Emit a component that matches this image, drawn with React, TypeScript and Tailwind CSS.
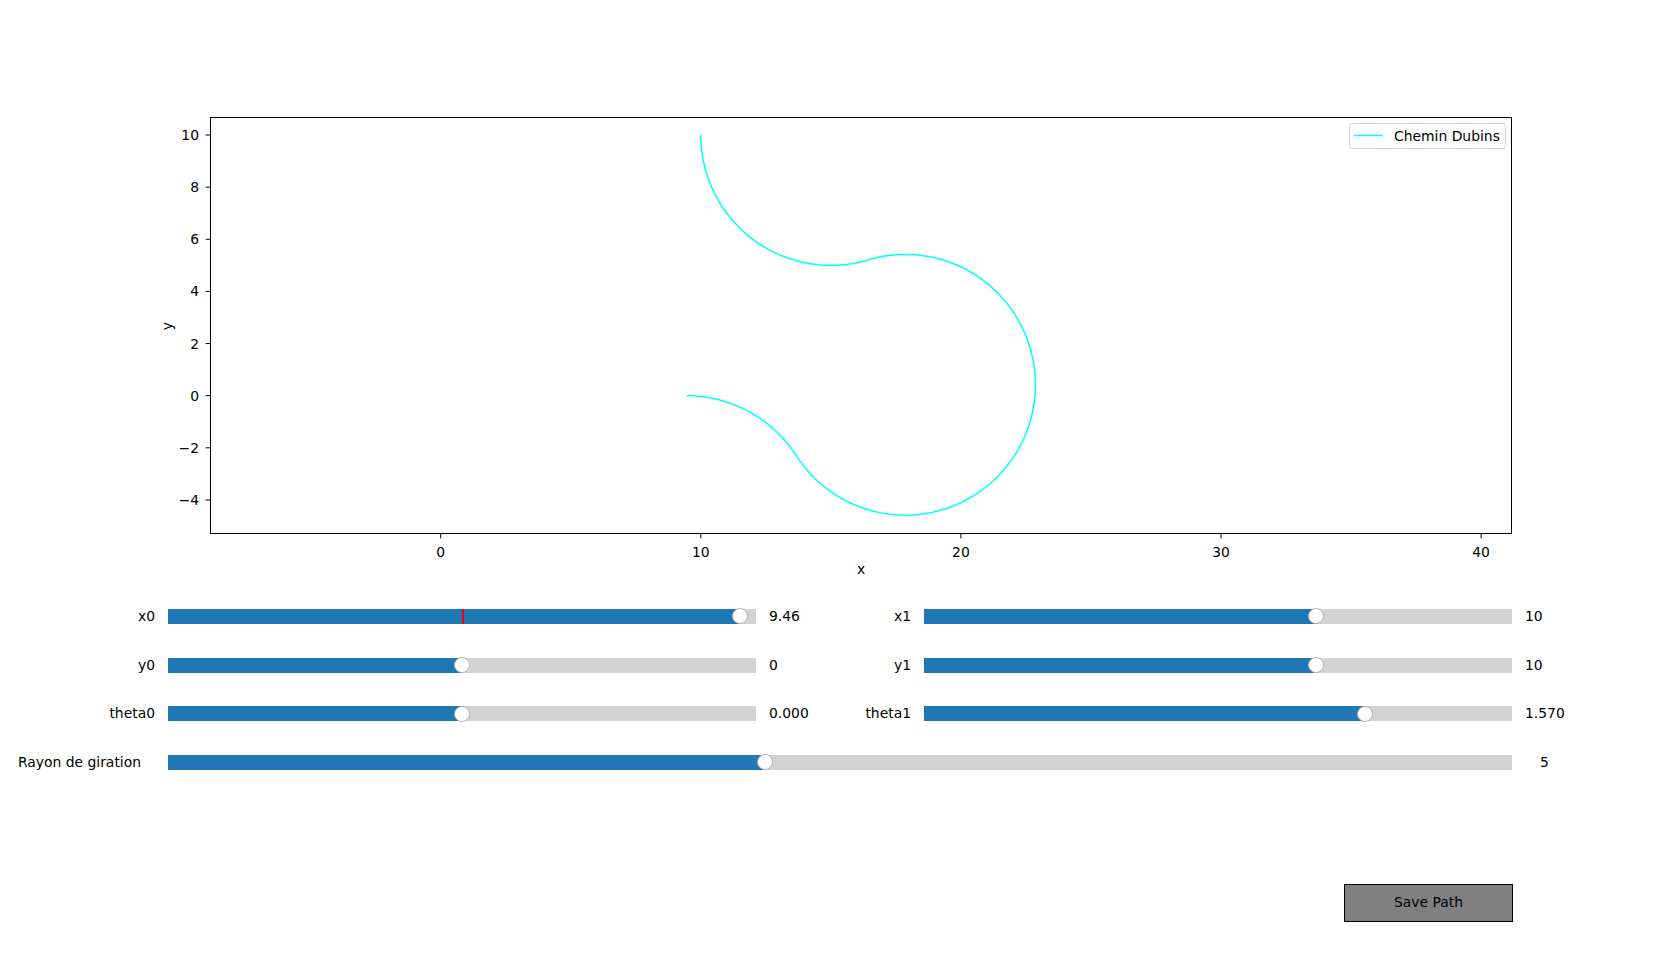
import React from "react";

const FONT = { fontFamily: '"DejaVu Sans", "Liberation Sans", sans-serif' };

// axes geometry (pixels)
const AX = { left: 210.5, top: 117.5, right: 1511.5, bottom: 533.5 };
const X0PX = 440.7; // x = 0
const Y10PX = 135; // y = 10
const SX = 26.01;
const SY = 26.07;

const px = (x: number) => X0PX + x * SX;
const py = (y: number) => Y10PX + (10 - y) * SY;

function dubinsPoints() {
  const r = 5;
  const c1 = [9.46, -5];
  const c3 = [15, 10];
  const dx = c3[0] - c1[0];
  const dy = c3[1] - c1[1];
  const d = Math.hypot(dx, dy);
  const ux = dx / d;
  const uy = dy / d;
  const h = Math.sqrt(4 * r * r - (d / 2) * (d / 2));
  const c2 = [c1[0] + dx / 2 + h * uy, c1[1] + dy / 2 - h * ux];
  const pts: [number, number][] = [];
  const arc = (c: number[], a0: number, a1: number) => {
    const n = 120;
    for (let i = 0; i <= n; i++) {
      const a = a0 + ((a1 - a0) * i) / n;
      pts.push([c[0] + r * Math.cos(a), c[1] + r * Math.sin(a)]);
    }
  };
  const t12 = Math.atan2(c2[1] - c1[1], c2[0] - c1[0]);
  arc(c1, Math.PI / 2, t12);
  const a2s = Math.atan2(c1[1] - c2[1], c1[0] - c2[0]);
  let a2e = Math.atan2(c3[1] - c2[1], c3[0] - c2[0]);
  while (a2e < a2s) a2e += Math.PI * 2;
  arc(c2, a2s, a2e);
  const a3s = Math.atan2(c2[1] - c3[1], c2[0] - c3[0]);
  arc(c3, a3s, -Math.PI);
  return pts.map(([x, y]) => `${px(x).toFixed(2)},${py(y).toFixed(2)}`).join(" ");
}

function Chart() {
  const xticks = [0, 10, 20, 30, 40];
  const yticks = [-4, -2, 0, 2, 4, 6, 8, 10];
  return (
    <svg width={1680} height={592} className="block" style={FONT}>
      <polyline points={dubinsPoints()} fill="none" stroke="#00ffff" strokeWidth={1.5} />
      <rect
        x={AX.left}
        y={AX.top}
        width={AX.right - AX.left}
        height={AX.bottom - AX.top}
        fill="none"
        stroke="#000"
        strokeWidth={1}
      />
      {xticks.map((t) => (
        <g key={t}>
          <line x1={px(t)} x2={px(t)} y1={AX.bottom} y2={AX.bottom + 4.9} stroke="#000" />
          <text x={px(t)} y={557} fontSize={13.9} textAnchor="middle" fill="#000">
            {t}
          </text>
        </g>
      ))}
      {yticks.map((t) => (
        <g key={t}>
          <line x1={AX.left - 4.9} x2={AX.left} y1={py(t)} y2={py(t)} stroke="#000" />
          <text x={199} y={py(t) + 5} fontSize={13.9} textAnchor="end" fill="#000">
            {t < 0 ? `\u2212${-t}` : t}
          </text>
        </g>
      ))}
      <text x={861} y={574} fontSize={13.9} textAnchor="middle" fill="#000">
        x
      </text>
      <text
        x={172}
        y={326}
        fontSize={13.9}
        textAnchor="middle"
        fill="#000"
        transform="rotate(-90 172 326)"
      >
        y
      </text>
      <rect x={1349.5} y={123.5} width={156} height={25} rx={2.5} fill="#fff" stroke="#d5d5d5" />
      <line x1={1354} x2={1383} y1={135.5} y2={135.5} stroke="#00ffff" strokeWidth={1.5} />
      <text x={1394} y={140.5} fontSize={13.9} fill="#000">
        Chemin Dubins
      </text>
    </svg>
  );
}

function Track({
  width,
  frac,
  init,
}: {
  width: number;
  frac: number;
  init?: number;
}) {
  const knob = width * frac;
  return (
    <div className="relative h-[15px] bg-[#d3d3d3]" style={{ width }}>
      <div className="absolute left-0 top-0 h-full bg-[#1f77b4]" style={{ width: knob }} />
      {init !== undefined && (
        <div className="absolute top-0 h-full w-[1.5px] bg-[#ff0000]" style={{ left: width * init }} />
      )}
      <div
        className="absolute top-1/2 h-[16px] w-[16px] -translate-x-1/2 -translate-y-1/2 rounded-full border border-[#b4b4b4] bg-white"
        style={{ left: knob }}
      />
    </div>
  );
}

const ROW = "flex h-[48.7px] items-center text-[13.9px] text-black";

export default function App() {
  const rows = [
    { l: "x0", lv: "9.46", lf: 572 / 588, li: 294 / 588, r: "x1", rv: "10", rf: 392 / 588, ri: 392 / 588 },
    { l: "y0", lv: "0", lf: 294 / 588, li: undefined, r: "y1", rv: "10", rf: 392 / 588, ri: undefined },
    { l: "theta0", lv: "0.000", lf: 294 / 588, li: 294 / 588, r: "theta1", rv: "1.570", rf: 441 / 588, ri: 441 / 588 },
  ];
  return (
    <div className="relative h-[971px] w-[1680px] overflow-hidden bg-white" style={FONT}>
      <Chart />
      {rows.map((row) => (
        <div key={row.l} className={ROW}>
          <div className="w-[155px] text-right">{row.l}</div>
          <div className="ml-[13px]">
            <Track width={588} frac={row.lf} init={row.li} />
          </div>
          <div className="flex w-[168px] justify-between px-[13px]">
            <span>{row.lv}</span>
            <span>{row.r}</span>
          </div>
          <Track width={588} frac={row.rf} init={row.ri} />
          <div className="pl-[13px]">{row.rv}</div>
        </div>
      ))}
      <div className={ROW}>
        <div className="w-[141px] text-right">Rayon de giration</div>
        <div className="ml-[27px]">
          <Track width={1344} frac={597 / 1344} />
        </div>
        <div className="pl-[28px]">5</div>
      </div>
      <div className="mt-[97px] flex justify-end pr-[167px]">
        <button className="flex h-[38px] w-[169px] items-center justify-center border border-black bg-[#808080] text-[13.9px] text-black">
          Save Path
        </button>
      </div>
    </div>
  );
}
